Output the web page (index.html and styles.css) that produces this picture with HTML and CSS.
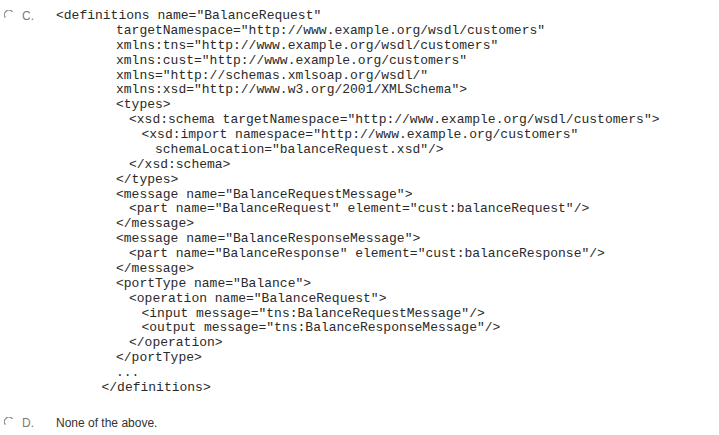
FILE: index.html
```html
<!DOCTYPE html>
<html>
<head>
<meta charset="utf-8">
<link rel="stylesheet" href="styles.css">
</head>
<body>
<div class="options">
  <div class="option option-c">
    <svg class="radio" width="10" height="10" viewBox="0 0 10 10"><path d="M8.5 1.9 A4.3 4.3 0 0 0 1.4 7.6" fill="none" stroke="#8a8a8a" stroke-width="1.2"/></svg>
    <span class="letter">C.</span>
    <div class="code">
      <div class="l l0">&lt;definitions name="BalanceRequest"</div>
      <div class="l l1">targetNamespace="http://www.example.org/wsdl/customers"</div>
      <div class="l l1">xmlns:tns="http://www.example.org/wsdl/customers"</div>
      <div class="l l1">xmlns:cust="http://www.example.org/customers"</div>
      <div class="l l1">xmlns="http://schemas.xmlsoap.org/wsdl/"</div>
      <div class="l l1">xmlns:xsd="http://www.w3.org/2001/XMLSchema"&gt;</div>
      <div class="l l1">&lt;types&gt;</div>
      <div class="l l2">&lt;xsd:schema targetNamespace="http://www.example.org/wsdl/customers"&gt;</div>
      <div class="l l3">&lt;xsd:import namespace="http://www.example.org/customers"</div>
      <div class="l l4">schemaLocation="balanceRequest.xsd"/&gt;</div>
      <div class="l l2">&lt;/xsd:schema&gt;</div>
      <div class="l l1">&lt;/types&gt;</div>
      <div class="l l1">&lt;message name="BalanceRequestMessage"&gt;</div>
      <div class="l l2">&lt;part name="BalanceRequest" element="cust:balanceRequest"/&gt;</div>
      <div class="l l1">&lt;/message&gt;</div>
      <div class="l l1">&lt;message name="BalanceResponseMessage"&gt;</div>
      <div class="l l2">&lt;part name="BalanceResponse" element="cust:balanceResponse"/&gt;</div>
      <div class="l l1">&lt;/message&gt;</div>
      <div class="l l1">&lt;portType name="Balance"&gt;</div>
      <div class="l l2">&lt;operation name="BalanceRequest"&gt;</div>
      <div class="l l3">&lt;input message="tns:BalanceRequestMessage"/&gt;</div>
      <div class="l l3">&lt;output message="tns:BalanceResponseMessage"/&gt;</div>
      <div class="l l2">&lt;/operation&gt;</div>
      <div class="l l1">&lt;/portType&gt;</div>
      <div class="l l1">...</div>
      <div class="l lend">&lt;/definitions&gt;</div>
    </div>
  </div>
  <div class="option option-d">
    <svg class="radio" width="10" height="10" viewBox="0 0 10 10"><path d="M8.5 1.9 A4.3 4.3 0 0 0 1.4 7.6" fill="none" stroke="#8a8a8a" stroke-width="1.2"/></svg>
    <span class="letter">D.</span>
    <span class="answer">None of the above.</span>
  </div>
</div>
</body>
</html>
```

FILE: styles.css
```css
html, body {
  margin: 0;
  padding: 0;
  background: #fff;
}
.options {
  padding: 9px 0 0 4px;
  display: flex;
  flex-direction: column;
  gap: 20px;
}
.option {
  display: flex;
  align-items: flex-start;
}
.radio {
  flex: none;
  margin-top: 1px;
  width: 10px;
  height: 10px;
}
.letter {
  flex: none;
  width: 34px;
  margin-left: 8px;
  font-family: "Liberation Sans", Arial, sans-serif;
  font-size: 12px;
  line-height: 15px;
  color: #7a7a7a;
}
.code {
  font-family: "Courier New", "Liberation Mono", monospace;
  font-size: 13px;
  line-height: 14.88px;
  color: #2a2a2a;
}
.l {
  white-space: pre;
  height: 14.88px;
}
.l0 { padding-left: 0; }
.l1 { padding-left: 60px; }
.l2 { padding-left: 73px; }
.l3 { padding-left: 85.5px; }
.l4 { padding-left: 99px; }
.lend { padding-left: 45.5px; }
.answer {
  font-family: "Liberation Sans", Arial, sans-serif;
  font-size: 12px;
  line-height: 15px;
  color: #333;
}
```
